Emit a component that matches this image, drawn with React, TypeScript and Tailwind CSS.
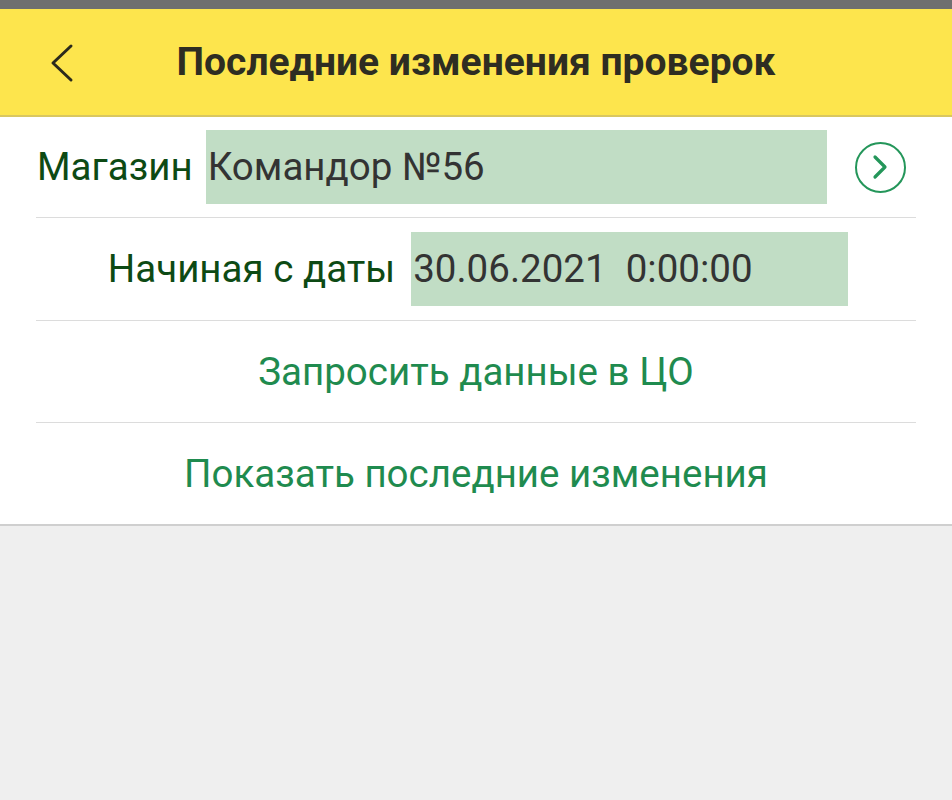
import React from "react";

export default function App() {
  return (
    <div className="w-[952px] h-[800px] bg-[#efefef] font-['Roboto',sans-serif] flex flex-col">
      <div className="h-[9px] bg-[#6f6f6f]" />
      <header className="h-[108px] bg-[#fde54d] border-b-2 border-[#d9c760] grid grid-cols-[110px_1fr_110px] items-center">
        <div className="pl-[49px] pt-[2px]">
          <svg width="26" height="40" viewBox="0 0 26 40" fill="none">
            <path d="M22 3 L4 20 L22 37" stroke="#2b2a1c" strokeWidth="3" strokeLinecap="round" strokeLinejoin="round" />
          </svg>
        </div>
        <h1 className="text-center text-[39px] font-bold text-[#2e2d22] pt-[1px] whitespace-nowrap">
          Последние изменения проверок
        </h1>
        <div />
      </header>
      <main className="bg-white border-b-2 border-[#cfcfcf]">
        <div className="mx-[36px] h-[101px] border-b border-[#dcdcdc] flex items-center">
          <span className="text-[38.5px] text-[#0d4a14] pl-[1px] mr-[13px]">Магазин</span>
          <div className="w-[621px] h-[74px] bg-[#c1ddc5] flex items-center pl-[2px] text-[38.5px] text-[#333333] shrink-0">
            Командор №56
          </div>
          <div className="ml-[28px] w-[51px] h-[51px] shrink-0 rounded-full border-[2.5px] border-[#24965a] flex items-center justify-center">
            <svg width="20" height="26" viewBox="0 0 20 26" fill="none">
              <path d="M5 3 L15 13 L5 23" stroke="#24965a" strokeWidth="3.2" strokeLinecap="round" strokeLinejoin="round" />
            </svg>
          </div>
        </div>
        <div className="mx-[36px] h-[103px] border-b border-[#dcdcdc] flex items-center justify-center pl-[4px]">
          <span className="text-[38.5px] text-[#0d4a14] mr-[16px]">Начиная с даты</span>
          <div className="w-[437px] h-[74px] bg-[#c1ddc5] flex items-center pl-[2px] text-[38.5px] text-[#333333] whitespace-pre shrink-0">
            30.06.2021  0:00:00
          </div>
        </div>
        <div className="mx-[36px] h-[102px] border-b border-[#dcdcdc] flex items-center justify-center">
          <span className="text-[38.5px] text-[#1f8b4f]">Запросить данные в ЦО</span>
        </div>
        <div className="mx-[36px] h-[101px] flex items-center justify-center">
          <span className="text-[38.5px] text-[#1f8b4f]">Показать последние изменения</span>
        </div>
      </main>
    </div>
  );
}
